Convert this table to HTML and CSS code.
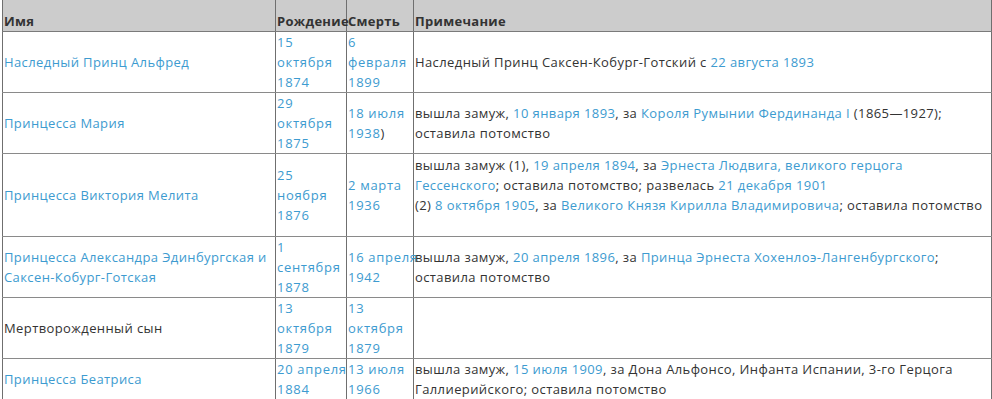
FILE: index.html
```html
<!DOCTYPE html>
<html lang="ru">
<head>
<meta charset="utf-8">
<link rel="stylesheet" href="styles.css">
</head>
<body>
<table class="kids">
  <colgroup>
    <col class="c-name">
    <col class="c-birth">
    <col class="c-death">
    <col class="c-note">
  </colgroup>
  <thead>
    <tr>
      <th>Имя</th>
      <th>Рождение</th>
      <th>Смерть</th>
      <th>Примечание</th>
    </tr>
  </thead>
  <tbody>
    <tr>
      <td><a href="#">Наследный Принц Альфред</a></td>
      <td class="date"><a href="#">15 октября</a> <a href="#">1874</a></td>
      <td class="date"><a href="#">6 февраля</a> <a href="#">1899</a></td>
      <td>Наследный Принц Саксен-Кобург-Готский с <a href="#">22 августа</a> <a href="#">1893</a></td>
    </tr>
    <tr>
      <td><a href="#">Принцесса Мария</a></td>
      <td class="date"><a href="#">29 октября</a> <a href="#">1875</a></td>
      <td class="date"><a href="#">18&nbsp;июля</a> <a href="#">1938</a>)</td>
      <td>вышла замуж, <a href="#">10 января</a> <a href="#">1893</a>, за <a href="#">Короля Румынии Фердинанда I</a> (1865—1927); оставила потомство</td>
    </tr>
    <tr class="tall">
      <td><a href="#">Принцесса Виктория Мелита</a></td>
      <td class="date"><a href="#">25 ноября</a> <a href="#">1876</a></td>
      <td class="date"><a href="#">2&nbsp;марта</a> <a href="#">1936</a></td>
      <td>вышла замуж (1), <a href="#">19 апреля</a> <a href="#">1894</a>, за <a href="#">Эрнеста Людвига, великого герцога Гессенского</a>; оставила потомство; развелась <a href="#">21 декабря</a> <a href="#">1901</a><br>(2) <a href="#">8 октября</a> <a href="#">1905</a>, за <a href="#">Великого Князя Кирилла Владимировича</a>; оставила потомство<br>&nbsp;</td>
    </tr>
    <tr>
      <td><a href="#">Принцесса Александра Эдинбургская и Саксен-Кобург-Готская</a></td>
      <td class="date"><a href="#">1 сентября</a> <a href="#">1878</a></td>
      <td class="date"><a href="#">16&nbsp;апреля</a> <a href="#">1942</a></td>
      <td>вышла замуж, <a href="#">20 апреля</a> <a href="#">1896</a>, за <a href="#">Принца Эрнеста Хохенлоэ-Лангенбургского</a>; оставила потомство</td>
    </tr>
    <tr>
      <td>Мертворожденный сын</td>
      <td class="date"><a href="#">13 октября</a> <a href="#">1879</a></td>
      <td class="date"><a href="#">13 октября</a> <a href="#">1879</a></td>
      <td></td>
    </tr>
    <tr>
      <td><a href="#">Принцесса Беатриса</a></td>
      <td class="date"><a href="#">20&nbsp;апреля</a> <a href="#">1884</a></td>
      <td class="date"><a href="#">13&nbsp;июля</a> <a href="#">1966</a></td>
      <td>вышла замуж, <a href="#">15 июля</a> <a href="#">1909</a>, за Дона Альфонсо, Инфанта Испании, 3-го Герцога Галлиерийского; оставила потомство</td>
    </tr>
  </tbody>
</table>
</body>
</html>
```
FILE: styles.css
```css
html, body {
  margin: 0;
  padding: 0;
  background: #ffffff;
}
body {
  padding-left: 2px;
  font-family: "Open Sans", "Noto Sans", sans-serif;
  font-size: 13px;
  line-height: 20px;
  letter-spacing: 0.4px;
  color: #333333;
}
.kids {
  border-collapse: collapse;
  table-layout: fixed;
  width: 989px;
  border-left: 1px solid #6f6f6f;
  border-right: 1px solid #6f6f6f;
}
.c-name { width: 273px; }
.c-birth { width: 71px; }
.c-death { width: 67px; }
.c-note { width: 578px; }
.kids th {
  background: #cccccc;
  height: 31px;
  padding: 0 0 0 1px;
  text-align: left;
  vertical-align: bottom;
  font-weight: 700;
  letter-spacing: 0.3px;
  color: #333333;
  border-left: 1px solid #6f6f6f;
  border-bottom: 1px solid #7a7a7a;
}
.kids td {
  padding: 0 0 0 1px;
  vertical-align: middle;
  border-left: 1px solid #6f6f6f;
  border-bottom: 1px solid #8a8a8a;
}
.kids td.date {
  letter-spacing: 0.7px;
}
.kids tr.tall td {
  height: 82px;
}
.kids a {
  color: #3d9bd0;
  text-decoration: none;
}
```
